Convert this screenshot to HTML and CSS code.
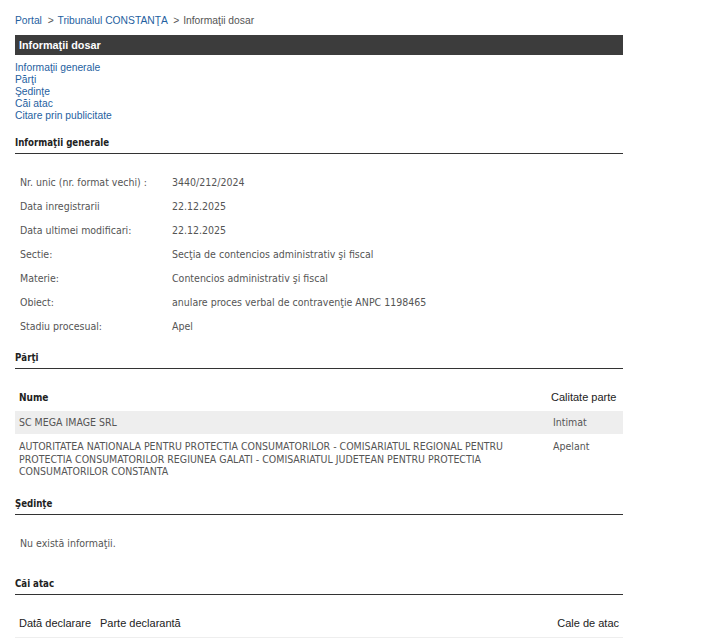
FILE: index.html
```html
<!DOCTYPE html>
<html lang="ro">
  <head>
    <meta charset="UTF-8" />
    <meta name="viewport" content="width=device-width, initial-scale=1.0" />
    <title>Informaţii dosar</title>
    <link rel="stylesheet" href="styles.css">
  </head>
  <body>
    <div class="page">
      <div class="breadcrumb">
        <a href="#">Portal</a>
        <span class="sep">&gt;</span>
        <a href="#">Tribunalul CONSTANŢA</a>
        <span class="sep">&gt;</span>
        <span>Informaţii dosar</span>
      </div>

      <h1 class="title-bar">Informaţii dosar</h1>

      <ul class="toc">
        <li><a href="#generale">Informaţii generale</a></li>
        <li><a href="#parti">Părţi</a></li>
        <li><a href="#sedinte">Şedinţe</a></li>
        <li><a href="#cai">Căi atac</a></li>
        <li><a href="#citare">Citare prin publicitate</a></li>
      </ul>

      <h2 class="section-title" id="generale">Informaţii generale</h2>
      <table class="info">
        <tr><td class="label">Nr. unic (nr. format vechi) :</td><td>3440/212/2024</td></tr>
        <tr><td class="label">Data inregistrarii</td><td>22.12.2025</td></tr>
        <tr><td class="label">Data ultimei modificari:</td><td>22.12.2025</td></tr>
        <tr><td class="label">Sectie:</td><td>Secţia de contencios administrativ şi fiscal</td></tr>
        <tr><td class="label">Materie:</td><td>Contencios administrativ şi fiscal</td></tr>
        <tr><td class="label">Obiect:</td><td>anulare proces verbal de contravenţie ANPC 1198465</td></tr>
        <tr><td class="label">Stadiu procesual:</td><td>Apel</td></tr>
      </table>

      <h2 class="section-title" id="parti">Părţi</h2>
      <table class="grid parti">
        <thead>
          <tr><th class="nume">Nume</th><th class="calitate">Calitate parte</th></tr>
        </thead>
        <tbody>
          <tr class="alt">
            <td>SC MEGA IMAGE SRL</td>
            <td class="calitate">Intimat</td>
          </tr>
          <tr class="multi">
            <td>AUTORITATEA NATIONALA PENTRU PROTECTIA CONSUMATORILOR - COMISARIATUL REGIONAL PENTRU PROTECTIA CONSUMATORILOR REGIUNEA GALATI - COMISARIATUL JUDETEAN PENTRU PROTECTIA CONSUMATORILOR CONSTANTA</td>
            <td class="calitate">Apelant</td>
          </tr>
        </tbody>
      </table>

      <h2 class="section-title" id="sedinte">Şedinţe</h2>
      <p class="empty">Nu există informaţii.</p>

      <h2 class="section-title" id="cai">Căi atac</h2>
      <table class="grid cai">
        <thead>
          <tr>
            <th class="data">Dată declarare</th>
            <th>Parte declarantă</th>
            <th class="cale">Cale de atac</th>
          </tr>
        </thead>
        <tbody>
          <tr class="alt"><td>&nbsp;</td><td></td><td></td></tr>
        </tbody>
      </table>
    </div>
  </body>
</html>
```

FILE: styles.css
```css
body {
  margin: 0;
  background: #fff;
  font-family: "Liberation Sans", Arial, sans-serif;
  font-size: 10.3px;
  color: #333;
}
a {
  color: #1f5f9f;
  text-decoration: none;
}
.page {
  width: 608px;
  padding: 14px 0 0 15px;
}
.breadcrumb {
  color: #555;
  line-height: 13px;
}
.breadcrumb .sep {
  margin: 0 1px 0 3px;
}
.title-bar {
  margin: 8px 0 0;
  height: 20px;
  line-height: 20px;
  padding-left: 4px;
  background: #3c3c3c;
  color: #fff;
  font-size: 10.8px;
  font-weight: bold;
}
.toc {
  list-style: none;
  margin: 7px 0 0;
  padding: 0;
}
.toc li {
  line-height: 12px;
}
.section-title {
  margin: 0;
  padding: 0 0 3px;
  border-bottom: 1px solid #333;
  font-family: "DejaVu Sans Condensed", Tahoma, sans-serif;
  font-size: 9.6px;
  font-weight: bold;
  color: #222;
  line-height: 14px;
}
#generale {
  margin-top: 14px;
}
.info {
  border-collapse: collapse;
  margin: 16px 0 13px;
  font-family: "DejaVu Sans Condensed", Tahoma, sans-serif;
  font-size: 10.5px;
  color: #555;
}
.info td {
  height: 24px;
  padding: 0 0 0 5px;
}
.info td.label {
  width: 147px;
}
.grid {
  width: 608px;
  border-collapse: collapse;
  margin-top: 15px;
}
.grid th {
  text-align: left;
  font-family: "Liberation Sans", Arial, sans-serif;
  font-size: 11px;
  font-weight: normal;
  color: #222;
  padding: 4px 4px 5px;
  height: 18px;
  white-space: nowrap;
}
.grid td {
  font-family: "DejaVu Sans Condensed", Tahoma, sans-serif;
  font-size: 10.5px;
  color: #555;
  vertical-align: top;
  padding: 5px 4px;
  line-height: 13px;
}
.grid tr.multi td {
  padding-top: 6px;
  line-height: 12.5px;
}
.grid tr.alt td {
  background: #eee;
}
.parti th.nume {
  font-family: "DejaVu Sans Condensed", Tahoma, sans-serif;
  font-weight: bold;
  font-size: 10px;
}
.parti th.calitate {
  width: 72px;
  padding-right: 0;
}
.parti td.calitate {
  padding-left: 6px;
}
.parti {
  margin-bottom: 14px;
}
.empty {
  font-family: "DejaVu Sans Condensed", Tahoma, sans-serif;
  font-size: 10.5px;
  margin: 22px 0 28px 5px;
  color: #555;
}
.cai th.data {
  width: 73px;
}
.cai th.cale {
  text-align: right;
}
```
